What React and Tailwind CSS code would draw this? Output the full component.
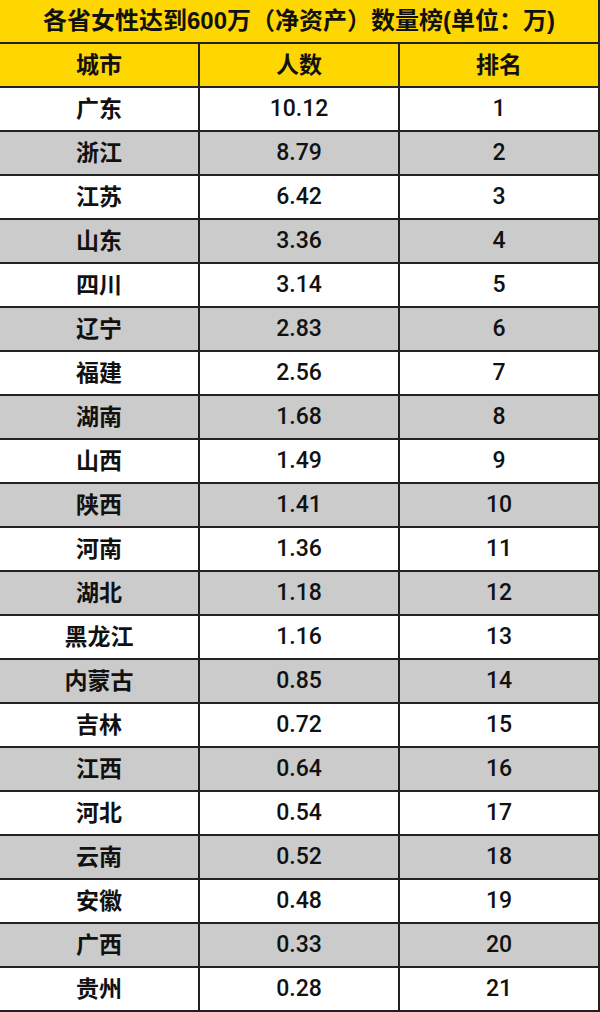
const ROWS = [
  ['广东', '10.12'],
  ['浙江', '8.79'],
  ['江苏', '6.42'],
  ['山东', '3.36'],
  ['四川', '3.14'],
  ['辽宁', '2.83'],
  ['福建', '2.56'],
  ['湖南', '1.68'],
  ['山西', '1.49'],
  ['陕西', '1.41'],
  ['河南', '1.36'],
  ['湖北', '1.18'],
  ['黑龙江', '1.16'],
  ['内蒙古', '0.85'],
  ['吉林', '0.72'],
  ['江西', '0.64'],
  ['河北', '0.54'],
  ['云南', '0.52'],
  ['安徽', '0.48'],
  ['广西', '0.33'],
  ['贵州', '0.28'],
]

const cjk = { fontFamily: '"Liberation Sans", "Noto Sans CJK SC", sans-serif' }
const num = { fontFamily: 'Roboto, "Liberation Sans", sans-serif' }

function Cell({ children, digits }) {
  return (
    <div
      className={`w-[200px] h-full flex items-center justify-center border-r-2 border-[#222222] ${
        digits ? 'font-medium text-[23px]' : 'font-bold text-[23px]'
      }`}
      style={digits ? num : cjk}
    >
      {children}
    </div>
  )
}

export default function App() {
  return (
    <div className="w-[600px] h-[1012px] bg-white text-[#111111] overflow-hidden" style={cjk}>
      {/* 标题 */}
      <div className="h-[44px] bg-[#fed600] border-r-2 border-b-2 border-[#222222] flex items-center justify-center text-[24px] font-bold">
        各省女性达到600万（净资产）数量榜(单位：万)
      </div>

      {/* 表头 */}
      <div className="h-[44px] bg-[#fed600] border-b-2 border-[#222222] flex">
        <Cell>城市</Cell>
        <Cell>人数</Cell>
        <Cell>排名</Cell>
      </div>

      {ROWS.map(([city, n], i) => (
        <div
          key={city}
          className={`h-[44px] border-b-2 border-[#222222] flex ${
            i % 2 === 1 ? 'bg-[#cbcbcb]' : 'bg-white'
          }`}
        >
          <Cell>{city}</Cell>
          <Cell digits>{n}</Cell>
          <Cell digits>{i + 1}</Cell>
        </div>
      ))}
    </div>
  )
}
